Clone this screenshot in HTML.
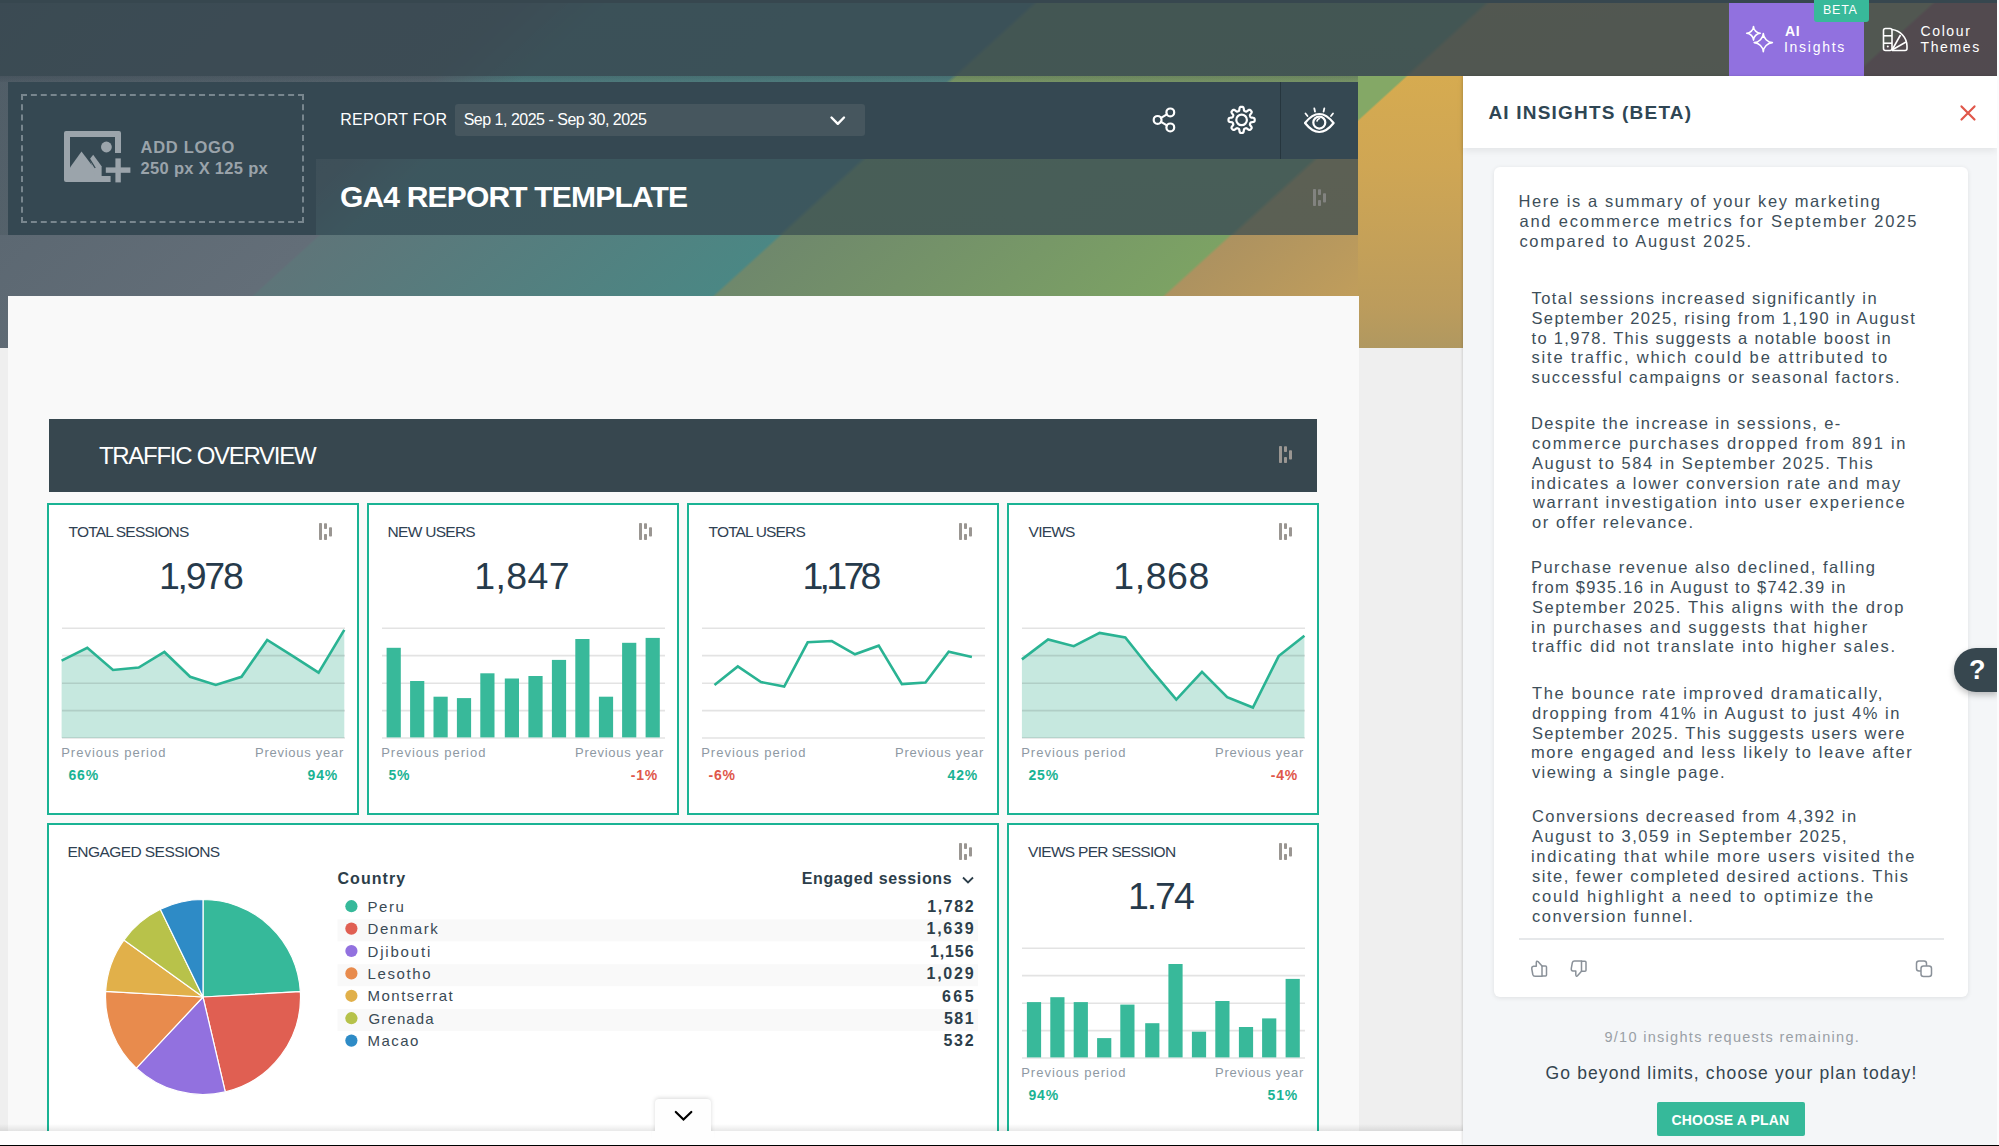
<!DOCTYPE html>
<html><head><meta charset="utf-8">
<style>
*{margin:0;padding:0;box-sizing:border-box}
html,body{width:1999px;height:1146px;overflow:hidden;background:#efefef;font-family:"Liberation Sans",sans-serif}
.a{position:absolute}
.t{position:absolute;line-height:1;white-space:nowrap}
svg{position:absolute;overflow:visible}

#bg{left:0;top:0;width:1999px;height:348px;
background:linear-gradient(137.7deg,#4f5c66 0,#55636c 350px,#4f7e80 410px,#4f8080 697px,#7d9c66 701px,#7c9a68 1001px,#caa357 1005px,#c8a25a 1302px,#cc5a50 1305px)}
#bgshade{left:0;top:0;width:1999px;height:348px;background:linear-gradient(to bottom,rgba(60,70,80,0) 0,rgba(100,110,115,0.18) 348px)}
#topbar{left:0;top:0;width:1999px;height:76px;background:rgba(55,71,79,0.82)}
#topline{left:0;top:0;width:1999px;height:3px;background:#37474f}
.dark{background:#354852}
.card{position:absolute;background:#fff;border:2px solid #1ab394}

</style></head>
<body>
<div id="bg" class="a"></div><div id="bgshade" class="a"></div><div id="topbar" class="a"></div><div id="topline" class="a"></div><div class="a" style="left:0;top:76px;width:1463px;height:6px;background:linear-gradient(to bottom,rgba(30,40,50,0.18),rgba(30,40,50,0.05))"></div><div class="a" style="left:1729px;top:3px;width:135px;height:73px;background:#9171df"></div><div class="a" style="left:1814px;top:0;width:55px;height:22px;background:#38b99a;border-radius:0 0 3px 3px"></div><svg style="left:0;top:0" width="1999" height="1146" viewBox="0 0 1999 1146"><g fill="none" stroke="#fff" stroke-width="1.6" stroke-linejoin="round"><path d="M1753.5,26.499999999999996 C1753.5,29.9 1756.9,33.3 1760.3,33.3 C1756.9,33.3 1753.5,36.699999999999996 1753.5,40.099999999999994 C1753.5,36.699999999999996 1750.1,33.3 1746.7,33.3 C1750.1,33.3 1753.5,29.9 1753.5,26.499999999999996 Z"/><path d="M1763.3,33.5 C1763.3,38.050000000000004 1767.85,42.6 1772.3999999999999,42.6 C1767.85,42.6 1763.3,47.15 1763.3,51.7 C1763.3,47.15 1758.75,42.6 1754.2,42.6 C1758.75,42.6 1763.3,38.050000000000004 1763.3,33.5 Z"/><rect x="1883.5" y="28.5" width="8.5" height="22" rx="2"/><line x1="1883.5" y1="35.8" x2="1892" y2="35.8"/><line x1="1883.5" y1="43.2" x2="1892" y2="43.2"/><path d="M1892,29.5 A17,17 0 0 1 1907,46 V48.5 Q1907,50.5 1905,50.5 H1892"/><line x1="1892" y1="50" x2="1900.5" y2="35"/><line x1="1892" y1="50" x2="1906" y2="42"/></g><circle cx="1887.8" cy="46.5" r="1" fill="#fff"/></svg><div class="a" style="left:0;top:235px;width:1358px;height:113px;background:linear-gradient(137.7deg,#5c6872 0,#636e78 214px,#5e7579 216.5px,#4b8784 524px,#6f886c 527px,#7ca264 827px,#ad9260 830px,#c6a15a 997px)"></div><div class="a" style="left:1358px;top:76px;width:105px;height:272px;background:linear-gradient(137.7deg,#84a866 0,#84a866 32px,rgba(132,168,102,0) 34px),linear-gradient(to bottom,#d6ab50 0,#cfa654 90px,#bc9c5c 230px,#b09860 272px)"></div><div class="a dark" style="left:8px;top:82px;width:308px;height:153px"></div><div class="a" style="left:21px;top:94px;width:283px;height:129px;border:2px dashed #78868e"></div><div class="a dark" style="left:316px;top:82px;width:1042px;height:77px"></div><div class="a" style="left:316px;top:159px;width:1042px;height:76px;background:rgba(53,72,82,0.72)"></div><div class="a" style="left:1280px;top:82px;width:1px;height:77px;background:#26363e"></div><div class="a" style="left:455px;top:104px;width:410px;height:32px;background:#46565e;border-radius:3px"></div><svg style="left:0;top:0" width="400" height="250" viewBox="0 0 400 250"><g fill="#9ba4ab"><path d="M66,131 H119 Q121,131 121,133 V153 H115 V137 H70 V176 H110.6 V182 H66 Q64,182 64,180 V133 Q64,131 66,131 Z"/><circle cx="106.4" cy="147" r="5.4"/><path d="M70,167.4 L81.5,151.4 L97,172 L97,176 L70,176 Z"/><path d="M89.8,159 L93.2,154.8 L101.6,166.2 V176 H95 Z"/><line x1="89.3" y1="158.6" x2="95.2" y2="168" stroke="#354852" stroke-width="1.3"/><rect x="105.8" y="167.4" width="24.6" height="5.4"/><rect x="115.4" y="158.4" width="5.4" height="24"/></g></svg><svg style="left:0;top:0" width="1400" height="250" viewBox="0 0 1400 250"><g fill="none" stroke="#fff" stroke-width="2.2" stroke-linecap="round" stroke-linejoin="round"><path d="M831.5,117.5 L837.8,123.8 L844,117.5" stroke-width="2.4"/><circle cx="1170.3" cy="112.4" r="3.9"/><circle cx="1157.6" cy="119.9" r="3.9"/><circle cx="1170.3" cy="127.4" r="3.9"/><line x1="1161" y1="117.9" x2="1166.9" y2="114.4"/><line x1="1161" y1="121.9" x2="1166.9" y2="125.4"/><path d="M1241.60,106.80 L1241.94,106.81 L1242.28,106.84 L1242.62,106.90 L1242.95,107.02 L1243.27,107.25 L1243.53,107.70 L1243.72,108.45 L1243.84,109.38 L1243.95,110.13 L1244.10,110.59 L1244.28,110.84 L1244.49,111.00 L1244.71,111.11 L1244.93,111.21 L1245.16,111.31 L1245.38,111.40 L1245.61,111.49 L1245.85,111.56 L1246.11,111.60 L1246.42,111.55 L1246.85,111.33 L1247.46,110.88 L1248.19,110.31 L1248.86,109.91 L1249.37,109.78 L1249.75,109.83 L1250.07,109.98 L1250.35,110.18 L1250.61,110.40 L1250.86,110.64 L1251.10,110.89 L1251.32,111.15 L1251.52,111.43 L1251.67,111.75 L1251.72,112.13 L1251.59,112.64 L1251.19,113.31 L1250.62,114.04 L1250.17,114.65 L1249.95,115.08 L1249.90,115.39 L1249.94,115.65 L1250.01,115.89 L1250.10,116.12 L1250.19,116.34 L1250.29,116.57 L1250.39,116.79 L1250.50,117.01 L1250.66,117.22 L1250.91,117.40 L1251.37,117.55 L1252.12,117.66 L1253.05,117.78 L1253.80,117.97 L1254.25,118.23 L1254.48,118.55 L1254.60,118.88 L1254.66,119.22 L1254.69,119.56 L1254.70,119.90 L1254.69,120.24 L1254.66,120.58 L1254.60,120.92 L1254.48,121.25 L1254.25,121.57 L1253.80,121.83 L1253.05,122.02 L1252.12,122.14 L1251.37,122.25 L1250.91,122.40 L1250.66,122.58 L1250.50,122.79 L1250.39,123.01 L1250.29,123.23 L1250.19,123.46 L1250.10,123.68 L1250.01,123.91 L1249.94,124.15 L1249.90,124.41 L1249.95,124.72 L1250.17,125.15 L1250.62,125.76 L1251.19,126.49 L1251.59,127.16 L1251.72,127.67 L1251.67,128.05 L1251.52,128.37 L1251.32,128.65 L1251.10,128.91 L1250.86,129.16 L1250.61,129.40 L1250.35,129.62 L1250.07,129.82 L1249.75,129.97 L1249.37,130.02 L1248.86,129.89 L1248.19,129.49 L1247.46,128.92 L1246.85,128.47 L1246.42,128.25 L1246.11,128.20 L1245.85,128.24 L1245.61,128.31 L1245.38,128.40 L1245.16,128.49 L1244.93,128.59 L1244.71,128.69 L1244.49,128.80 L1244.28,128.96 L1244.10,129.21 L1243.95,129.67 L1243.84,130.42 L1243.72,131.35 L1243.53,132.10 L1243.27,132.55 L1242.95,132.78 L1242.62,132.90 L1242.28,132.96 L1241.94,132.99 L1241.60,133.00 L1241.26,132.99 L1240.92,132.96 L1240.58,132.90 L1240.25,132.78 L1239.93,132.55 L1239.67,132.10 L1239.48,131.35 L1239.36,130.42 L1239.25,129.67 L1239.10,129.21 L1238.92,128.96 L1238.71,128.80 L1238.49,128.69 L1238.27,128.59 L1238.04,128.49 L1237.82,128.40 L1237.59,128.31 L1237.35,128.24 L1237.09,128.20 L1236.78,128.25 L1236.35,128.47 L1235.74,128.92 L1235.01,129.49 L1234.34,129.89 L1233.83,130.02 L1233.45,129.97 L1233.13,129.82 L1232.85,129.62 L1232.59,129.40 L1232.34,129.16 L1232.10,128.91 L1231.88,128.65 L1231.68,128.37 L1231.53,128.05 L1231.48,127.67 L1231.61,127.16 L1232.01,126.49 L1232.58,125.76 L1233.03,125.15 L1233.25,124.72 L1233.30,124.41 L1233.26,124.15 L1233.19,123.91 L1233.10,123.68 L1233.01,123.46 L1232.91,123.23 L1232.81,123.01 L1232.70,122.79 L1232.54,122.58 L1232.29,122.40 L1231.83,122.25 L1231.08,122.14 L1230.15,122.02 L1229.40,121.83 L1228.95,121.57 L1228.72,121.25 L1228.60,120.92 L1228.54,120.58 L1228.51,120.24 L1228.50,119.90 L1228.51,119.56 L1228.54,119.22 L1228.60,118.88 L1228.72,118.55 L1228.95,118.23 L1229.40,117.97 L1230.15,117.78 L1231.08,117.66 L1231.83,117.55 L1232.29,117.40 L1232.54,117.22 L1232.70,117.01 L1232.81,116.79 L1232.91,116.57 L1233.01,116.34 L1233.10,116.12 L1233.19,115.89 L1233.26,115.65 L1233.30,115.39 L1233.25,115.08 L1233.03,114.65 L1232.58,114.04 L1232.01,113.31 L1231.61,112.64 L1231.48,112.13 L1231.53,111.75 L1231.68,111.43 L1231.88,111.15 L1232.10,110.89 L1232.34,110.64 L1232.59,110.40 L1232.85,110.18 L1233.13,109.98 L1233.45,109.83 L1233.83,109.78 L1234.34,109.91 L1235.01,110.31 L1235.74,110.88 L1236.35,111.33 L1236.78,111.55 L1237.09,111.60 L1237.35,111.56 L1237.59,111.49 L1237.82,111.40 L1238.04,111.31 L1238.27,111.21 L1238.49,111.11 L1238.71,111.00 L1238.92,110.84 L1239.10,110.59 L1239.25,110.13 L1239.36,109.38 L1239.48,108.45 L1239.67,107.70 L1239.93,107.25 L1240.25,107.02 L1240.58,106.90 L1240.92,106.84 L1241.26,106.81 Z"/><circle cx="1241.6" cy="119.9" r="5.3"/><path d="M1305,123 Q1319.3,105 1333.6,123 Q1319.3,141 1305,123 Z"/><circle cx="1319.3" cy="122.6" r="6" /><path d="M1317,121 Q1317.5,119 1319.5,118.5" stroke-width="1.6"/><line x1="1314.3" y1="108.5" x2="1315" y2="111.5" stroke-width="1.8"/><line x1="1324.3" y1="108.5" x2="1323.6" y2="111.5" stroke-width="1.8"/><line x1="1305.5" y1="113.5" x2="1307.5" y2="116" stroke-width="1.8"/><line x1="1333" y1="113.5" x2="1331" y2="116" stroke-width="1.8"/></g></svg><svg style="left:1312.5px;top:189px" width="14" height="18" viewBox="0 0 14 18"><g fill="#8c8c8c" opacity="0.8"><rect x="0" y="0" width="3" height="17" rx="0.8"/><rect x="5" y="0.3" width="3" height="5.7" rx="0.8"/><rect x="5" y="11" width="3" height="6" rx="0.8"/><rect x="10" y="4.3" width="3" height="9.3" rx="0.8"/></g></svg><div class="a" style="left:8px;top:296px;width:1351px;height:835px;background:#f9f9f9"></div><div class="a" style="left:49px;top:419px;width:1268px;height:73px;background:#37474f"></div><svg style="left:1279px;top:446px" width="14" height="18" viewBox="0 0 14 18"><g fill="#9a9692" opacity="1"><rect x="0" y="0" width="3" height="17" rx="0.8"/><rect x="5" y="0.3" width="3" height="5.7" rx="0.8"/><rect x="5" y="11" width="3" height="6" rx="0.8"/><rect x="10" y="4.3" width="3" height="9.3" rx="0.8"/></g></svg><div class="card" style="left:47px;top:503px;width:312px;height:312px"></div><div class="card" style="left:367px;top:503px;width:312px;height:312px"></div><div class="card" style="left:687px;top:503px;width:312px;height:312px"></div><div class="card" style="left:1007px;top:503px;width:312px;height:312px"></div><div class="card" style="left:47px;top:823px;width:952px;height:330px"></div><div class="card" style="left:1007px;top:823px;width:312px;height:330px"></div><svg style="left:319px;top:523px" width="14" height="18" viewBox="0 0 14 18"><g fill="#9a9692" opacity="1"><rect x="0" y="0" width="3" height="17" rx="0.8"/><rect x="5" y="0.3" width="3" height="5.7" rx="0.8"/><rect x="5" y="11" width="3" height="6" rx="0.8"/><rect x="10" y="4.3" width="3" height="9.3" rx="0.8"/></g></svg><svg style="left:639px;top:523px" width="14" height="18" viewBox="0 0 14 18"><g fill="#9a9692" opacity="1"><rect x="0" y="0" width="3" height="17" rx="0.8"/><rect x="5" y="0.3" width="3" height="5.7" rx="0.8"/><rect x="5" y="11" width="3" height="6" rx="0.8"/><rect x="10" y="4.3" width="3" height="9.3" rx="0.8"/></g></svg><svg style="left:959px;top:523px" width="14" height="18" viewBox="0 0 14 18"><g fill="#9a9692" opacity="1"><rect x="0" y="0" width="3" height="17" rx="0.8"/><rect x="5" y="0.3" width="3" height="5.7" rx="0.8"/><rect x="5" y="11" width="3" height="6" rx="0.8"/><rect x="10" y="4.3" width="3" height="9.3" rx="0.8"/></g></svg><svg style="left:1279px;top:523px" width="14" height="18" viewBox="0 0 14 18"><g fill="#9a9692" opacity="1"><rect x="0" y="0" width="3" height="17" rx="0.8"/><rect x="5" y="0.3" width="3" height="5.7" rx="0.8"/><rect x="5" y="11" width="3" height="6" rx="0.8"/><rect x="10" y="4.3" width="3" height="9.3" rx="0.8"/></g></svg><svg style="left:959px;top:843px" width="14" height="18" viewBox="0 0 14 18"><g fill="#9a9692" opacity="1"><rect x="0" y="0" width="3" height="17" rx="0.8"/><rect x="5" y="0.3" width="3" height="5.7" rx="0.8"/><rect x="5" y="11" width="3" height="6" rx="0.8"/><rect x="10" y="4.3" width="3" height="9.3" rx="0.8"/></g></svg><svg style="left:1279px;top:843px" width="14" height="18" viewBox="0 0 14 18"><g fill="#9a9692" opacity="1"><rect x="0" y="0" width="3" height="17" rx="0.8"/><rect x="5" y="0.3" width="3" height="5.7" rx="0.8"/><rect x="5" y="11" width="3" height="6" rx="0.8"/><rect x="10" y="4.3" width="3" height="9.3" rx="0.8"/></g></svg><svg style="left:0;top:0" width="1400" height="1146" viewBox="0 0 1400 1146"><line x1="382" y1="628.2" x2="665" y2="628.2" stroke="#000" stroke-opacity="0.11" stroke-width="1.6"/><line x1="382" y1="655.6" x2="665" y2="655.6" stroke="#000" stroke-opacity="0.11" stroke-width="1.6"/><line x1="382" y1="683.2" x2="665" y2="683.2" stroke="#000" stroke-opacity="0.11" stroke-width="1.6"/><line x1="382" y1="710.6" x2="665" y2="710.6" stroke="#000" stroke-opacity="0.11" stroke-width="1.6"/><line x1="382" y1="738.0" x2="665" y2="738.0" stroke="#000" stroke-opacity="0.11" stroke-width="1.6"/><line x1="1022" y1="948.2" x2="1305" y2="948.2" stroke="#000" stroke-opacity="0.11" stroke-width="1.6"/><line x1="1022" y1="975.6" x2="1305" y2="975.6" stroke="#000" stroke-opacity="0.11" stroke-width="1.6"/><line x1="1022" y1="1003.2" x2="1305" y2="1003.2" stroke="#000" stroke-opacity="0.11" stroke-width="1.6"/><line x1="1022" y1="1030.6" x2="1305" y2="1030.6" stroke="#000" stroke-opacity="0.11" stroke-width="1.6"/><line x1="1022" y1="1058.0" x2="1305" y2="1058.0" stroke="#000" stroke-opacity="0.11" stroke-width="1.6"/><polygon points="61.6,738 61.6,660.6 87.3,647.8 113.0,670.0 138.7,667.5 164.4,652.0 190.1,676.8 215.8,685.0 241.5,676.8 267.2,639.9 292.9,656.1 318.6,672.7 344.3,629.9 344.3,738" fill="#c6e8df"/><polygon points="1021.9,738 1021.9,659.4 1048.1,639.5 1073.8,646.2 1099.6,632.9 1125.3,637.4 1151.0,669.7 1176.3,699.6 1202.0,671.9 1227.2,697.1 1252.9,707.5 1278.7,656.1 1304.4,635.7 1304.4,738" fill="#c6e8df"/><rect x="386.6" y="647.8" width="14.2" height="89.6" fill="#38b99a"/><rect x="410.1" y="681.0" width="14.2" height="56.4" fill="#38b99a"/><rect x="433.5" y="696.7" width="14.2" height="40.7" fill="#38b99a"/><rect x="456.9" y="698.1" width="14.2" height="39.3" fill="#38b99a"/><rect x="480.3" y="673.3" width="14.2" height="64.1" fill="#38b99a"/><rect x="504.8" y="678.5" width="14.2" height="58.9" fill="#38b99a"/><rect x="528.4" y="676.0" width="14.2" height="61.4" fill="#38b99a"/><rect x="551.9" y="659.9" width="14.2" height="77.5" fill="#38b99a"/><rect x="575.3" y="639.0" width="14.2" height="98.4" fill="#38b99a"/><rect x="598.9" y="696.7" width="14.2" height="40.7" fill="#38b99a"/><rect x="622.1" y="642.8" width="14.2" height="94.6" fill="#38b99a"/><rect x="645.6" y="637.9" width="14.2" height="99.5" fill="#38b99a"/><rect x="1026.9" y="1002.1" width="14.2" height="55.3" fill="#38b99a"/><rect x="1050.3" y="997.2" width="14.2" height="60.2" fill="#38b99a"/><rect x="1073.7" y="1002.1" width="14.2" height="55.3" fill="#38b99a"/><rect x="1097.1" y="1038.1" width="14.2" height="19.3" fill="#38b99a"/><rect x="1120.3" y="1004.6" width="14.2" height="52.8" fill="#38b99a"/><rect x="1145.2" y="1023.2" width="14.2" height="34.2" fill="#38b99a"/><rect x="1168.4" y="964.0" width="14.2" height="93.4" fill="#38b99a"/><rect x="1191.9" y="1031.7" width="14.2" height="25.7" fill="#38b99a"/><rect x="1215.3" y="1001.0" width="14.2" height="56.4" fill="#38b99a"/><rect x="1238.9" y="1027.0" width="14.2" height="30.4" fill="#38b99a"/><rect x="1262.1" y="1018.4" width="14.2" height="39.0" fill="#38b99a"/><rect x="1285.6" y="978.9" width="14.2" height="78.5" fill="#38b99a"/><line x1="62" y1="628.2" x2="345" y2="628.2" stroke="#000" stroke-opacity="0.11" stroke-width="1.6"/><line x1="62" y1="655.6" x2="345" y2="655.6" stroke="#000" stroke-opacity="0.11" stroke-width="1.6"/><line x1="62" y1="683.2" x2="345" y2="683.2" stroke="#000" stroke-opacity="0.11" stroke-width="1.6"/><line x1="62" y1="710.6" x2="345" y2="710.6" stroke="#000" stroke-opacity="0.11" stroke-width="1.6"/><line x1="62" y1="738.0" x2="345" y2="738.0" stroke="#000" stroke-opacity="0.11" stroke-width="1.6"/><line x1="702" y1="628.2" x2="985" y2="628.2" stroke="#000" stroke-opacity="0.11" stroke-width="1.6"/><line x1="702" y1="655.6" x2="985" y2="655.6" stroke="#000" stroke-opacity="0.11" stroke-width="1.6"/><line x1="702" y1="683.2" x2="985" y2="683.2" stroke="#000" stroke-opacity="0.11" stroke-width="1.6"/><line x1="702" y1="710.6" x2="985" y2="710.6" stroke="#000" stroke-opacity="0.11" stroke-width="1.6"/><line x1="702" y1="738.0" x2="985" y2="738.0" stroke="#000" stroke-opacity="0.11" stroke-width="1.6"/><line x1="1022" y1="628.2" x2="1305" y2="628.2" stroke="#000" stroke-opacity="0.11" stroke-width="1.6"/><line x1="1022" y1="655.6" x2="1305" y2="655.6" stroke="#000" stroke-opacity="0.11" stroke-width="1.6"/><line x1="1022" y1="683.2" x2="1305" y2="683.2" stroke="#000" stroke-opacity="0.11" stroke-width="1.6"/><line x1="1022" y1="710.6" x2="1305" y2="710.6" stroke="#000" stroke-opacity="0.11" stroke-width="1.6"/><line x1="1022" y1="738.0" x2="1305" y2="738.0" stroke="#000" stroke-opacity="0.11" stroke-width="1.6"/><polyline points="61.6,660.6 87.3,647.8 113.0,670.0 138.7,667.5 164.4,652.0 190.1,676.8 215.8,685.0 241.5,676.8 267.2,639.9 292.9,656.1 318.6,672.7 344.3,629.9" fill="none" stroke="#2ab393" stroke-width="2.6" stroke-linejoin="miter"/><polyline points="714.5,685.1 737.8,666.4 761.0,682.1 784.2,686.6 807.7,642.3 831.8,641.0 855.0,654.3 878.7,645.7 901.9,684.1 925.5,682.6 948.7,651.8 971.9,656.9" fill="none" stroke="#2ab393" stroke-width="2.6" stroke-linejoin="miter"/><polyline points="1021.9,659.4 1048.1,639.5 1073.8,646.2 1099.6,632.9 1125.3,637.4 1151.0,669.7 1176.3,699.6 1202.0,671.9 1227.2,697.1 1252.9,707.5 1278.7,656.1 1304.4,635.7" fill="none" stroke="#2ab393" stroke-width="2.6" stroke-linejoin="miter"/></svg><svg style="left:0;top:0" width="1000" height="1146" viewBox="0 0 1000 1146"><circle cx="351.4" cy="906.2" r="6.1" fill="#36b99a"/><rect x="337.5" y="919.4" width="640.5" height="22" fill="#f9f9f9"/><circle cx="351.4" cy="928.6" r="6.1" fill="#e05f52"/><circle cx="351.4" cy="951.0" r="6.1" fill="#9271df"/><rect x="337.5" y="964.2" width="640.5" height="22" fill="#f9f9f9"/><circle cx="351.4" cy="973.4" r="6.1" fill="#e88b4d"/><circle cx="351.4" cy="995.8" r="6.1" fill="#e1b04a"/><rect x="337.5" y="1009.0" width="640.5" height="22" fill="#f9f9f9"/><circle cx="351.4" cy="1018.2" r="6.1" fill="#b6c24a"/><circle cx="351.4" cy="1040.6" r="6.1" fill="#2e8bc6"/><path d="M963,877.5 L968,882.5 L973,877.5" fill="none" stroke="#2c3e4a" stroke-width="1.8"/><path d="M203,997 L203.00,899.50 A97.5,97.5 0 0 1 300.36,991.69 Z" fill="#36b99a" stroke="#fff" stroke-width="1.2" stroke-linejoin="round"/><path d="M203,997 L300.36,991.69 A97.5,97.5 0 0 1 225.28,1091.92 Z" fill="#e05f52" stroke="#fff" stroke-width="1.2" stroke-linejoin="round"/><path d="M203,997 L225.28,1091.92 A97.5,97.5 0 0 1 136.32,1068.14 Z" fill="#9271df" stroke="#fff" stroke-width="1.2" stroke-linejoin="round"/><path d="M203,997 L136.32,1068.14 A97.5,97.5 0 0 1 105.66,991.36 Z" fill="#e88b4d" stroke="#fff" stroke-width="1.2" stroke-linejoin="round"/><path d="M203,997 L105.66,991.36 A97.5,97.5 0 0 1 123.86,940.05 Z" fill="#e1b04a" stroke="#fff" stroke-width="1.2" stroke-linejoin="round"/><path d="M203,997 L123.86,940.05 A97.5,97.5 0 0 1 160.35,909.32 Z" fill="#b8c24a" stroke="#fff" stroke-width="1.2" stroke-linejoin="round"/><path d="M203,997 L160.35,909.32 A97.5,97.5 0 0 1 203.00,899.50 Z" fill="#2e8bc6" stroke="#fff" stroke-width="1.2" stroke-linejoin="round"/></svg><div class="a" style="left:0;top:1124px;width:1463px;height:7px;background:linear-gradient(to bottom,rgba(0,0,0,0),rgba(0,0,0,0.09))"></div><div class="a" style="left:0;top:1131px;width:1463px;height:14px;background:#fefefe"></div><div class="a" style="left:655px;top:1099px;width:56px;height:40px;background:#fefefe;border-radius:4px 4px 0 0;box-shadow:0 -1px 4px rgba(0,0,0,0.15)"></div><div class="a" style="left:652px;top:1131px;width:62px;height:14px;background:#fefefe"></div><svg style="left:670px;top:1106px" width="30" height="22" viewBox="0 0 30 22"><path d="M5.8,6 L13.5,13.5 L21.3,6" fill="none" stroke="#000" stroke-width="2.2" stroke-linecap="round"/></svg><div class="a" style="left:1463px;top:76px;width:534px;height:1069px;background:#f4f6f8;box-shadow:-1px 0 2px rgba(0,0,0,0.12)"></div><div class="a" style="left:1463px;top:76px;width:534px;height:72px;background:#fff;box-shadow:0 3px 7px rgba(0,0,0,0.07)"></div><svg style="left:1955px;top:100px" width="26" height="26" viewBox="0 0 26 26"><path d="M6.5,6.4 L19.5,19.5 M19.5,6.4 L6.5,19.5" stroke="#e0574a" stroke-width="2.2" stroke-linecap="round"/></svg><div class="a" style="left:1494px;top:167px;width:474px;height:830px;background:#fff;border-radius:6px;box-shadow:0 1px 5px rgba(0,0,0,0.09)"></div><div class="a" style="left:1519px;top:938px;width:425px;height:1.5px;background:#e6e8ea"></div><svg style="left:1525px;top:955px" width="420" height="30" viewBox="1525 955 420 30"><g fill="none" stroke="#8a9199" stroke-width="1.5" stroke-linejoin="round" stroke-linecap="round"><path d="M1542,966 V976 H1545.5 Q1546.5,976 1546.5,975 V967 Q1546.5,966 1545.5,966 Z"/><path d="M1542,966 L1538,961.5 Q1536.5,960.5 1536.3,962.5 V966.2 H1533.5 Q1531.5,966.5 1531.8,969 L1532.8,974.5 Q1533.3,976.3 1535,976.3 H1542"/><path d="M1581.5,961.3 V971.3 H1585 Q1586,971.3 1586,970.3 V962.3 Q1586,961.3 1585,961.3 Z"/><path d="M1581.5,971.3 L1577.5,975.8 Q1576,976.8 1575.8,974.8 V971.1 H1573 Q1571,970.8 1571.3,968.3 L1572.3,962.8 Q1572.8,961 1574.5,961 H1581.5"/><rect x="1916.5" y="961" width="10" height="10" rx="2.5"/><rect x="1921" y="966" width="10.5" height="10.5" rx="2.5" fill="#fff"/></g></svg><div class="a" style="left:1657px;top:1102px;width:148px;height:34px;background:#36b99a;border-radius:2px"></div><div class="a" style="left:1954px;top:648px;width:44px;height:44px;background:#37474f;border-radius:22px 0 0 22px;box-shadow:0 3px 6px rgba(0,0,0,0.25)"></div><div class="a" style="left:1997px;top:0;width:2px;height:1145px;background:#fcfcfd"></div><div class="a" style="left:0;top:1145px;width:1999px;height:1px;background:#000"></div>
<div class="t" style="left:1823.0px;top:3.5px;font-size:12.5px;color:#fff;letter-spacing:0.74px;">BETA</div>
<div class="t" style="left:1785.0px;top:23.5px;font-size:14px;color:#fff;letter-spacing:0.60px;font-weight:bold;">AI</div>
<div class="t" style="left:1784.0px;top:39.6px;font-size:14px;color:#fff;letter-spacing:1.72px;">Insights</div>
<div class="t" style="left:1920.5px;top:23.5px;font-size:14px;color:#fff;letter-spacing:1.62px;">Colour</div>
<div class="t" style="left:1920.5px;top:39.6px;font-size:14px;color:#fff;letter-spacing:1.63px;">Themes</div>
<div class="t" style="left:140.6px;top:139.4px;font-size:16.5px;color:#9aa3aa;letter-spacing:0.70px;font-weight:bold;">ADD LOGO</div>
<div class="t" style="left:140.6px;top:160.0px;font-size:16.5px;color:#9aa3aa;letter-spacing:0.30px;font-weight:bold;">250 px X 125 px</div>
<div class="t" style="left:340.2px;top:112.1px;font-size:16px;color:#fff;letter-spacing:0.29px;">REPORT FOR</div>
<div class="t" style="left:463.7px;top:112.1px;font-size:16px;color:#fff;letter-spacing:-0.50px;">Sep 1, 2025 - Sep 30, 2025</div>
<div class="t" style="left:340.0px;top:182.2px;font-size:30px;color:#fff;letter-spacing:-0.82px;font-weight:bold;">GA4 REPORT TEMPLATE</div>
<div class="t" style="left:98.9px;top:443.8px;font-size:24px;color:#fff;letter-spacing:-1.28px;">TRAFFIC OVERVIEW</div>
<div class="t" style="left:68.6px;top:524.0px;font-size:15.5px;color:#2f4152;letter-spacing:-0.83px;">TOTAL SESSIONS</div>
<div class="t" style="left:158.9px;top:558.1px;font-size:37.5px;color:#263a4b;letter-spacing:-2.25px;">1,978</div>
<div class="t" style="left:387.6px;top:524.0px;font-size:15.5px;color:#2f4152;letter-spacing:-0.72px;">NEW USERS</div>
<div class="t" style="left:474.2px;top:558.1px;font-size:37.5px;color:#263a4b;letter-spacing:0.40px;">1,847</div>
<div class="t" style="left:708.6px;top:524.0px;font-size:15.5px;color:#2f4152;letter-spacing:-0.85px;">TOTAL USERS</div>
<div class="t" style="left:802.5px;top:558.1px;font-size:37.5px;color:#263a4b;letter-spacing:-3.75px;">1,178</div>
<div class="t" style="left:1028.6px;top:524.0px;font-size:15.5px;color:#2f4152;letter-spacing:-0.78px;">VIEWS</div>
<div class="t" style="left:1113.2px;top:558.1px;font-size:37.5px;color:#263a4b;letter-spacing:0.60px;">1,868</div>
<div class="t" style="left:61.2px;top:746.1px;font-size:13px;color:#8e99a3;letter-spacing:0.99px;">Previous period</div>
<div class="t" style="left:255.0px;top:746.1px;font-size:13px;color:#8e99a3;letter-spacing:0.74px;">Previous year</div>
<div class="t" style="left:68.5px;top:768.3px;font-size:14px;color:#1ab394;letter-spacing:0.80px;font-weight:bold;">66%</div>
<div class="t" style="left:307.6px;top:768.3px;font-size:14px;color:#1ab394;letter-spacing:0.80px;font-weight:bold;">94%</div>
<div class="t" style="left:381.2px;top:746.1px;font-size:13px;color:#8e99a3;letter-spacing:0.99px;">Previous period</div>
<div class="t" style="left:575.0px;top:746.1px;font-size:13px;color:#8e99a3;letter-spacing:0.74px;">Previous year</div>
<div class="t" style="left:388.5px;top:768.3px;font-size:14px;color:#1ab394;letter-spacing:0.80px;font-weight:bold;">5%</div>
<div class="t" style="left:630.8px;top:768.3px;font-size:14px;color:#e0574a;letter-spacing:0.80px;font-weight:bold;">-1%</div>
<div class="t" style="left:701.2px;top:746.1px;font-size:13px;color:#8e99a3;letter-spacing:0.99px;">Previous period</div>
<div class="t" style="left:895.0px;top:746.1px;font-size:13px;color:#8e99a3;letter-spacing:0.74px;">Previous year</div>
<div class="t" style="left:708.5px;top:768.3px;font-size:14px;color:#e0574a;letter-spacing:0.80px;font-weight:bold;">-6%</div>
<div class="t" style="left:947.6px;top:768.3px;font-size:14px;color:#1ab394;letter-spacing:0.80px;font-weight:bold;">42%</div>
<div class="t" style="left:1021.2px;top:746.1px;font-size:13px;color:#8e99a3;letter-spacing:0.99px;">Previous period</div>
<div class="t" style="left:1215.0px;top:746.1px;font-size:13px;color:#8e99a3;letter-spacing:0.74px;">Previous year</div>
<div class="t" style="left:1028.5px;top:768.3px;font-size:14px;color:#1ab394;letter-spacing:0.80px;font-weight:bold;">25%</div>
<div class="t" style="left:1270.8px;top:768.3px;font-size:14px;color:#e0574a;letter-spacing:0.80px;font-weight:bold;">-4%</div>
<div class="t" style="left:1021.2px;top:1066.1px;font-size:13px;color:#8e99a3;letter-spacing:0.99px;">Previous period</div>
<div class="t" style="left:1215.0px;top:1066.1px;font-size:13px;color:#8e99a3;letter-spacing:0.74px;">Previous year</div>
<div class="t" style="left:1028.5px;top:1088.3px;font-size:14px;color:#1ab394;letter-spacing:0.80px;font-weight:bold;">94%</div>
<div class="t" style="left:1267.6px;top:1088.3px;font-size:14px;color:#1ab394;letter-spacing:0.80px;font-weight:bold;">51%</div>
<div class="t" style="left:67.6px;top:844.0px;font-size:15.5px;color:#2f4152;letter-spacing:-0.57px;">ENGAGED SESSIONS</div>
<div class="t" style="left:1028.0px;top:844.0px;font-size:15.5px;color:#2f4152;letter-spacing:-0.70px;">VIEWS PER SESSION</div>
<div class="t" style="left:1127.9px;top:878.1px;font-size:37.5px;color:#263a4b;letter-spacing:-2.04px;">1.74</div>
<div class="t" style="left:337.5px;top:870.9px;font-size:16px;color:#2c3e4a;letter-spacing:1.05px;font-weight:bold;">Country</div>
<div class="t" style="left:801.7px;top:870.9px;font-size:16px;color:#2c3e4a;letter-spacing:0.63px;font-weight:bold;">Engaged sessions</div>
<div class="t" style="left:367.5px;top:898.8px;font-size:15px;color:#3a4a55;letter-spacing:1.52px;">Peru</div>
<div class="t" style="left:927.3px;top:898.9px;font-size:16px;color:#2c3e4a;letter-spacing:1.56px;font-weight:bold;">1,782</div>
<div class="t" style="left:367.5px;top:921.2px;font-size:15px;color:#3a4a55;letter-spacing:1.58px;">Denmark</div>
<div class="t" style="left:926.5px;top:921.3px;font-size:16px;color:#2c3e4a;letter-spacing:1.76px;font-weight:bold;">1,639</div>
<div class="t" style="left:367.5px;top:943.6px;font-size:15px;color:#3a4a55;letter-spacing:1.82px;">Djibouti</div>
<div class="t" style="left:929.9px;top:943.7px;font-size:16px;color:#2c3e4a;letter-spacing:0.91px;font-weight:bold;">1,156</div>
<div class="t" style="left:367.5px;top:966.0px;font-size:15px;color:#3a4a55;letter-spacing:1.63px;">Lesotho</div>
<div class="t" style="left:926.5px;top:966.1px;font-size:16px;color:#2c3e4a;letter-spacing:1.76px;font-weight:bold;">1,029</div>
<div class="t" style="left:367.5px;top:988.4px;font-size:15px;color:#3a4a55;letter-spacing:1.50px;">Montserrat</div>
<div class="t" style="left:941.9px;top:988.5px;font-size:16px;color:#2c3e4a;letter-spacing:2.50px;font-weight:bold;">665</div>
<div class="t" style="left:368.5px;top:1010.8px;font-size:15px;color:#3a4a55;letter-spacing:1.13px;">Grenada</div>
<div class="t" style="left:944.0px;top:1010.9px;font-size:16px;color:#2c3e4a;letter-spacing:1.45px;font-weight:bold;">581</div>
<div class="t" style="left:367.5px;top:1033.2px;font-size:15px;color:#3a4a55;letter-spacing:1.48px;">Macao</div>
<div class="t" style="left:943.5px;top:1033.3px;font-size:16px;color:#2c3e4a;letter-spacing:1.70px;font-weight:bold;">532</div>
<div class="t" style="left:1488.4px;top:102.9px;font-size:19px;color:#2f4654;letter-spacing:1.20px;font-weight:bold;">AI INSIGHTS (BETA)</div>
<div class="t" style="left:1518.4px;top:192.9px;font-size:16.5px;color:#3d4e59;letter-spacing:1.60px;">Here is a summary of your key marketing</div>
<div class="t" style="left:1519.4px;top:212.8px;font-size:16.5px;color:#3d4e59;letter-spacing:1.81px;">and ecommerce metrics for September 2025</div>
<div class="t" style="left:1519.4px;top:232.7px;font-size:16.5px;color:#3d4e59;letter-spacing:1.70px;">compared to August 2025.</div>
<div class="t" style="left:1531.5px;top:289.7px;font-size:16.5px;color:#3d4e59;letter-spacing:1.45px;">Total sessions increased significantly in</div>
<div class="t" style="left:1531.5px;top:309.6px;font-size:16.5px;color:#3d4e59;letter-spacing:1.35px;">September 2025, rising from 1,190 in August</div>
<div class="t" style="left:1531.5px;top:329.5px;font-size:16.5px;color:#3d4e59;letter-spacing:1.32px;">to 1,978. This suggests a notable boost in</div>
<div class="t" style="left:1531.5px;top:349.4px;font-size:16.5px;color:#3d4e59;letter-spacing:1.84px;">site traffic, which could be attributed to</div>
<div class="t" style="left:1531.5px;top:369.3px;font-size:16.5px;color:#3d4e59;letter-spacing:1.45px;">successful campaigns or seasonal factors.</div>
<div class="t" style="left:1530.9px;top:414.8px;font-size:16.5px;color:#3d4e59;letter-spacing:1.40px;">Despite the increase in sessions, e-</div>
<div class="t" style="left:1531.9px;top:434.7px;font-size:16.5px;color:#3d4e59;letter-spacing:1.72px;">commerce purchases dropped from 891 in</div>
<div class="t" style="left:1531.9px;top:454.6px;font-size:16.5px;color:#3d4e59;letter-spacing:1.53px;">August to 584 in September 2025. This</div>
<div class="t" style="left:1530.9px;top:474.5px;font-size:16.5px;color:#3d4e59;letter-spacing:1.53px;">indicates a lower conversion rate and may</div>
<div class="t" style="left:1532.9px;top:494.4px;font-size:16.5px;color:#3d4e59;letter-spacing:1.64px;">warrant investigation into user experience</div>
<div class="t" style="left:1531.9px;top:514.3px;font-size:16.5px;color:#3d4e59;letter-spacing:1.59px;">or offer relevance.</div>
<div class="t" style="left:1530.9px;top:558.8px;font-size:16.5px;color:#3d4e59;letter-spacing:1.50px;">Purchase revenue also declined, falling</div>
<div class="t" style="left:1531.9px;top:578.7px;font-size:16.5px;color:#3d4e59;letter-spacing:1.25px;">from $935.16 in August to $742.39 in</div>
<div class="t" style="left:1531.9px;top:598.6px;font-size:16.5px;color:#3d4e59;letter-spacing:1.57px;">September 2025. This aligns with the drop</div>
<div class="t" style="left:1530.9px;top:618.5px;font-size:16.5px;color:#3d4e59;letter-spacing:1.60px;">in purchases and suggests that higher</div>
<div class="t" style="left:1531.9px;top:638.4px;font-size:16.5px;color:#3d4e59;letter-spacing:1.67px;">traffic did not translate into higher sales.</div>
<div class="t" style="left:1531.9px;top:684.7px;font-size:16.5px;color:#3d4e59;letter-spacing:1.67px;">The bounce rate improved dramatically,</div>
<div class="t" style="left:1531.9px;top:704.6px;font-size:16.5px;color:#3d4e59;letter-spacing:1.53px;">dropping from 41% in August to just 4% in</div>
<div class="t" style="left:1531.9px;top:724.5px;font-size:16.5px;color:#3d4e59;letter-spacing:1.40px;">September 2025. This suggests users were</div>
<div class="t" style="left:1530.9px;top:744.4px;font-size:16.5px;color:#3d4e59;letter-spacing:1.60px;">more engaged and less likely to leave after</div>
<div class="t" style="left:1531.9px;top:764.3px;font-size:16.5px;color:#3d4e59;letter-spacing:1.45px;">viewing a single page.</div>
<div class="t" style="left:1531.9px;top:808.3px;font-size:16.5px;color:#3d4e59;letter-spacing:1.47px;">Conversions decreased from 4,392 in</div>
<div class="t" style="left:1531.9px;top:828.2px;font-size:16.5px;color:#3d4e59;letter-spacing:1.53px;">August to 3,059 in September 2025,</div>
<div class="t" style="left:1530.9px;top:848.1px;font-size:16.5px;color:#3d4e59;letter-spacing:1.71px;">indicating that while more users visited the</div>
<div class="t" style="left:1531.9px;top:868.0px;font-size:16.5px;color:#3d4e59;letter-spacing:1.54px;">site, fewer completed desired actions. This</div>
<div class="t" style="left:1531.9px;top:887.9px;font-size:16.5px;color:#3d4e59;letter-spacing:1.86px;">could highlight a need to optimize the</div>
<div class="t" style="left:1531.9px;top:907.8px;font-size:16.5px;color:#3d4e59;letter-spacing:1.59px;">conversion funnel.</div>
<div class="t" style="left:1604.4px;top:1029.7px;font-size:14.5px;color:#9aa0a6;letter-spacing:1.30px;">9/10 insights requests remaining.</div>
<div class="t" style="left:1545.6px;top:1065.2px;font-size:17.5px;color:#34454f;letter-spacing:1.12px;">Go beyond limits, choose your plan today!</div>
<div class="t" style="left:1671.6px;top:1112.5px;font-size:14px;color:#fff;letter-spacing:0.15px;font-weight:bold;">CHOOSE A PLAN</div>
<div class="t" style="left:1969.0px;top:657.1px;font-size:27px;color:#fff;letter-spacing:0.00px;font-weight:bold;">?</div>

</body></html>
